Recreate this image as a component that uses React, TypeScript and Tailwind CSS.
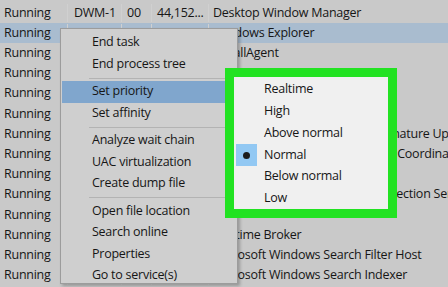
import React from 'react';

type Row = {
  status: string;
  user: string;
  session: string;
  mem: string;
  desc: string;
  selected?: boolean;
};

const rows: Row[] = [
  { status: 'Running', user: 'DWM-1', session: '00', mem: '44,152...', desc: 'Desktop Window Manager' },
  { status: 'Running', user: 'Sam', session: '00', mem: '46,572...', desc: 'Windows Explorer', selected: true },
  { status: 'Running', user: 'Sam', session: '00', mem: '2,104 K', desc: 'InstallAgent' },
  { status: 'Running', user: 'Sam', session: '00', mem: '1,880 K', desc: 'Host Process' },
  { status: 'Running', user: 'Sam', session: '00', mem: '3,216 K', desc: 'Settings' },
  { status: 'Running', user: 'SYSTEM', session: '00', mem: '1,412 K', desc: 'Service Host' },
  { status: 'Running', user: 'SYSTEM', session: '00', mem: '6,020 K', desc: 'Windows Antimalware Client Signature Updates' },
  { status: 'Running', user: 'SYSTEM', session: '00', mem: '2,736 K', desc: 'Distributed Link Tracking Service Coordinator' },
  { status: 'Running', user: 'Sam', session: '00', mem: '1,120 K', desc: 'Host Process' },
  { status: 'Running', user: 'SYSTEM', session: '00', mem: '4,512 K', desc: 'Windows Diagnostic Kit Data Collection Service' },
  { status: 'Running', user: 'Sam', session: '00', mem: '980 K', desc: '' },
  { status: 'Running', user: 'Sam', session: '00', mem: '5,304 K', desc: 'Runtime Broker' },
  { status: 'Running', user: 'SYSTEM', session: '00', mem: '1,656 K', desc: 'Microsoft Windows Search Filter Host' },
  { status: 'Running', user: 'SYSTEM', session: '00', mem: '12,480 K', desc: 'Microsoft Windows Search Indexer' },
];

// null = separator line
const menu: (string | null)[] = [
  'End task',
  'End process tree',
  null,
  'Set priority',
  'Set affinity',
  null,
  'Analyze wait chain',
  'UAC virtualization',
  'Create dump file',
  null,
  'Open file location',
  'Search online',
  'Properties',
  'Go to service(s)',
];

const priorities = ['Realtime', 'High', 'Above normal', 'Normal', 'Below normal', 'Low'];

export default function App() {
  return (
    <div
      className="relative w-[448px] h-[287px] overflow-hidden bg-[#c9c9c9] text-[12.5px] tracking-[-0.25px] text-[#161616]"
      style={{ fontFamily: '"Open Sans", "Noto Sans", sans-serif' }}
    >
      {/* process table */}
      <div className="flex flex-col pt-[3px]">
        {rows.map((r, i) => (
          <div
            key={i}
            className={
              'flex items-center h-[20.2px] whitespace-nowrap ' + (r.selected ? 'bg-[#a9bccf]' : '')
            }
          >
            <div className="w-[68px] shrink-0 pl-[4px] border-r border-[#d0d0d0]">{r.status}</div>
            <div className="w-[54px] shrink-0 pl-[6px] border-r border-[#d0d0d0]">{r.user}</div>
            <div className="w-[30px] shrink-0 pl-[5px] border-r border-[#d0d0d0]">{r.session}</div>
            <div className="w-[57px] shrink-0 pl-[5px] overflow-hidden border-r border-[#d0d0d0]">{r.mem}</div>
            <div className="pl-[4px]">{r.desc}</div>
          </div>
        ))}
      </div>

      {/* context menu */}
      <div className="absolute left-[60px] top-[28px] w-[178px] h-[256px] overflow-hidden bg-[#cfcfcf] border border-[#9c9c9c] shadow-[2px_2px_3px_rgba(0,0,0,0.25)] pt-[3px] px-[1px]">
        {menu.map((m, i) =>
          m === null ? (
            <div key={i} className="h-[6px] flex items-center pl-[27px]">
              <div className="h-px w-full bg-[#b3b3b3]" />
            </div>
          ) : (
            <div
              key={i}
              className={
                'h-[21.5px] flex items-center pl-[30px] whitespace-nowrap ' +
                (m === 'Set priority' ? 'bg-[#80a6cd]' : '')
              }
            >
              {m}
            </div>
          ),
        )}
      </div>

      {/* priority submenu, outlined in green */}
      <div className="absolute left-[225px] top-[68px] w-[172px] border-[9px] border-[#22e222] bg-[#f0f0f0] pt-[2px]">
        {priorities.map((p) => (
          <div key={p} className="relative h-[21.7px] flex items-center pl-[30px]">
            {p === 'Normal' && (
              <div className="absolute left-[2px] top-0 w-[21px] h-[22px] bg-[#92c8f3] flex items-center justify-center">
                <div className="w-[7px] h-[7px] rounded-full bg-[#1c1c1c]" />
              </div>
            )}
            {p}
          </div>
        ))}
      </div>
    </div>
  );
}
